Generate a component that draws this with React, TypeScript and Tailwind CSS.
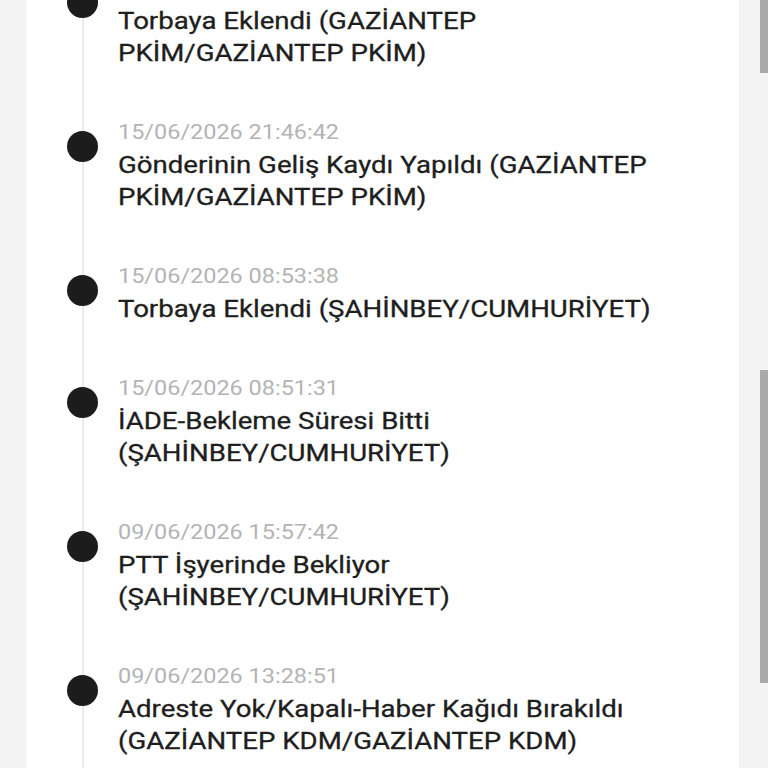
import React from "react";

const items = [
  { date: "15/06/2026 21:46:52", title: "Torbaya Eklendi (GAZİANTEP PKİM/GAZİANTEP PKİM)" },
  { date: "15/06/2026 21:46:42", title: "Gönderinin Geliş Kaydı Yapıldı (GAZİANTEP PKİM/GAZİANTEP PKİM)" },
  { date: "15/06/2026 08:53:38", title: "Torbaya Eklendi (ŞAHİNBEY/CUMHURİYET)" },
  { date: "15/06/2026 08:51:31", title: "İADE-Bekleme Süresi Bitti (ŞAHİNBEY/CUMHURİYET)" },
  { date: "09/06/2026 15:57:42", title: "PTT İşyerinde Bekliyor (ŞAHİNBEY/CUMHURİYET)" },
  { date: "09/06/2026 13:28:51", title: "Adreste Yok/Kapalı-Haber Kağıdı Bırakıldı (GAZİANTEP KDM/GAZİANTEP KDM)" },
  { date: "09/06/2026 09:12:10", title: "Dağıtıma Çıkarıldı (GAZİANTEP KDM/GAZİANTEP KDM)" },
];

export default function App() {
  return (
    <div
      className="w-[768px] h-[768px] overflow-hidden bg-[#f4f4f4] flex"
      style={{ fontFamily: "Roboto, 'Noto Sans', sans-serif" }}
    >
      <div className="ml-[27px] w-[712px] h-full bg-white overflow-hidden">
        <div className="ml-[55px] w-[563px] border-l-2 border-[#ebebeb] -mt-[29px] min-h-[900px]">
          {items.map((it, i) => (
            <div key={i} className="relative pl-[34px] pb-[46px]">
              <div className="absolute -left-[17px] top-[16px] w-[31px] h-[31px] rounded-full bg-[#1c1c1c]" />
              <div className="w-[497px] origin-left scale-x-[1.15]">
                <div className="text-[20.4px] leading-[34px] text-[#b4b4b4]">{it.date}</div>
                <div className="text-[24px] leading-[32px] text-[#1e1e1e] [-webkit-text-stroke:0.3px_#1e1e1e]">{it.title}</div>
              </div>
            </div>
          ))}
        </div>
      </div>
      <div className="flex-1 h-full bg-[#f3f3f3] relative">
        <div className="absolute right-0 top-0 w-[8px] h-[73px] bg-[#a9a9a9]" />
        <div className="absolute right-0 top-[370px] w-[8px] h-[313px] bg-[#a9a9a9]" />
      </div>
    </div>
  );
}
